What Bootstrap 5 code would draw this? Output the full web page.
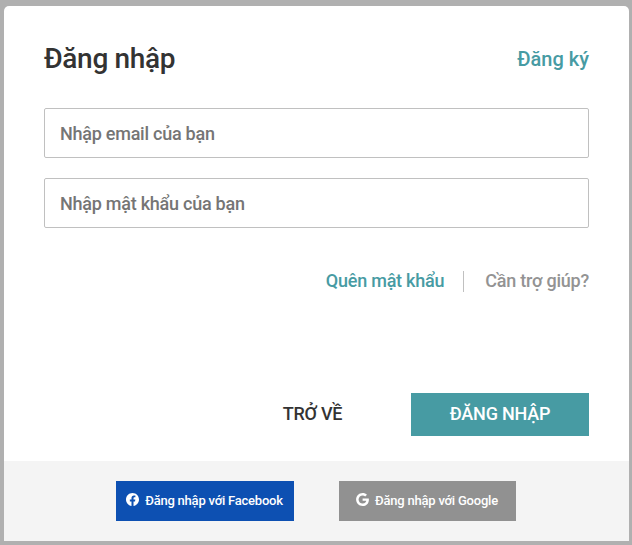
<!DOCTYPE html>
<html lang="vi">
<head>
<meta charset="utf-8">
<meta name="viewport" content="width=device-width, initial-scale=1">
<title>Đăng nhập</title>
<link href="https://cdn.jsdelivr.net/npm/bootstrap@5.3.0/dist/css/bootstrap.min.css" rel="stylesheet">
<style>
body{background:#b0b0b0;font-family:Roboto,sans-serif;font-weight:500;height:545px;overflow:hidden;padding:6px 3px 4px 4px}
.auth-panel{height:535px;background:#fff;border-radius:5px 5px 0 0;overflow:hidden}
.auth-body{height:455px;padding:36px 40px 25px}
.auth-title{font-size:28px;line-height:33px;color:#333;font-weight:500;letter-spacing:-.33px}
.teal{color:#479ba3}
.switch-link{font-size:20px;line-height:24px}
.auth-input{height:50px;border:1px solid #c0c0c0;border-radius:2px;padding:0 15px;font-size:18px;font-weight:500;color:#333;letter-spacing:-.25px}
.auth-input::placeholder{color:#757575;opacity:1}
.fields{margin-top:33px;gap:20px}
.helpers{margin-top:43px;font-size:18px;line-height:22px;letter-spacing:-.23px}
.helpers .forgot{padding-right:19px;border-right:1px solid #c0c0c0}
.helpers .help{padding-left:21px;color:#939393}
.helpers span{display:block;margin-top:-1px}
.act{font-size:18px;height:43px;width:178px;border:0;border-radius:0;font-weight:500;padding:0 0 2px;letter-spacing:-.2px}
.act-back{width:197px;color:#333;letter-spacing:-.3px}
.act-login,.act-login:hover{background:#479ba3;color:#fff}
.auth-social{height:80px;background:#f4f4f4;gap:45px;padding-right:2px}
.social{height:40px;border-radius:0;border:0;font-size:13px;font-weight:500;color:#fff;padding:0;gap:6px;letter-spacing:-.22px}
.social svg{margin-bottom:3px}
.fb{width:178px;background:#0d50b2}
.gg{width:177px;background:#919191}
</style>
</head>
<body>
<main class="auth-panel">
<form class="auth-body d-flex flex-column">
<div class="d-flex justify-content-between align-items-center">
<h1 class="auth-title m-0">Đăng nhập</h1>
<a href="#" class="switch-link teal text-decoration-none">Đăng ký</a>
</div>
<div class="fields d-flex flex-column">
<input type="email" class="form-control auth-input" placeholder="Nhập email của bạn">
<input type="password" class="form-control auth-input" placeholder="Nhập mật khẩu của bạn">
</div>
<div class="helpers d-flex justify-content-end">
<a href="#" class="forgot teal text-decoration-none"><span>Quên mật khẩu</span></a>
<a href="#" class="help text-decoration-none"><span>Cần trợ giúp?</span></a>
</div>
<div class="d-flex justify-content-end mt-auto">
<button type="button" class="btn act act-back">TRỞ VỀ</button>
<button type="submit" class="btn act act-login">ĐĂNG NHẬP</button>
</div>
</form>
<div class="auth-social d-flex justify-content-center align-items-center">
<button type="button" class="btn social fb d-flex align-items-center justify-content-center">
<svg width="13" height="13" viewBox="8 8 496 496" fill="currentColor"><path d="M504 256C504 119 393 8 256 8S8 119 8 256c0 123.780 90.690 226.380 209.250 245V327.690h-63V256h63v-54.640c0-62.150 37-96.480 93.670-96.480 27.140 0 55.520 4.840 55.520 4.840v61h-31.280c-30.800 0-40.410 19.120-40.410 38.730V256h68.780l-11 71.690h-57.780V501C413.310 482.380 504 379.780 504 256z"/></svg>
<span>Đăng nhập với Facebook</span></button>
<button type="button" class="btn social gg d-flex align-items-center justify-content-center">
<svg width="13" height="13" viewBox="0 8 488 496" fill="currentColor"><path d="M488 261.800C488 403.300 391.100 504 248 504 110.800 504 0 393.200 0 256S110.800 8 248 8c66.800 0 123 24.500 166.300 64.900l-67.500 64.900C258.500 52.600 94.300 116.600 94.300 256c0 86.500 69.100 156.600 153.700 156.600 98.200 0 135-70.400 140.800-106.900H248v-85.300h236.100c2.300 12.700 3.900 24.900 3.900 41.400z"/></svg>
<span>Đăng nhập với Google</span></button>
</div>
</main>
<script src="https://cdn.jsdelivr.net/npm/bootstrap@5.3.0/dist/js/bootstrap.bundle.min.js"></script>
</body>
</html>
